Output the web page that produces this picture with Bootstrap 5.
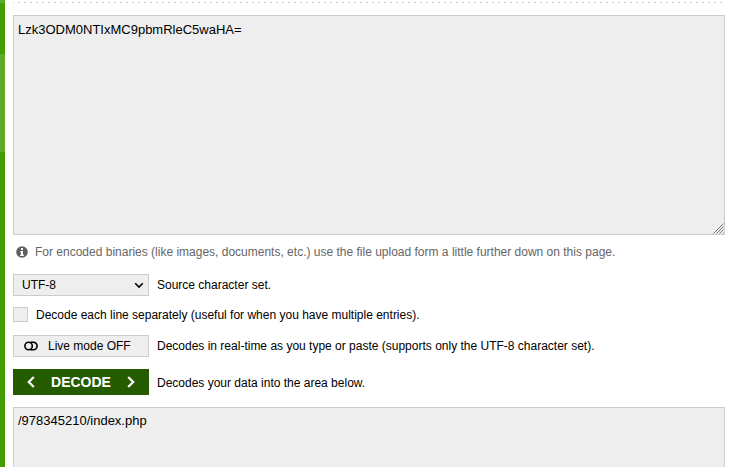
<!DOCTYPE html>
<html lang="en">
<head>
<meta charset="utf-8">
<meta name="viewport" content="width=device-width, initial-scale=1">
<title>Base64 Decode</title>
<link href="https://cdn.jsdelivr.net/npm/bootstrap@5.3.0/dist/css/bootstrap.min.css" rel="stylesheet">
<style>
body{font:12px/16px "Liberation Sans",Arial,sans-serif;color:#000;background:#fff}
.page-view{height:467px}
.side-strip{width:5px;background:linear-gradient(#61ab2c 3px,#429b00 3px 54px,#61ab2c 54px 152px,#429b00 152px)}
.decoder{width:712px;margin-left:8px}
.separator{height:1px;margin-top:2px;margin-bottom:12px;background:repeating-linear-gradient(90deg,#ccc 0 1px,transparent 1px 5px,#ccc 5px 6px)}
.form-control.data-area{border:1px solid #ccc;border-radius:0;background:#eee;color:#000;font-size:13px;line-height:18px;padding:5px 4px;height:220px;min-height:0;resize:none}
.form-control.result-area{height:180px;margin-top:12px;padding-top:4px}
.grip{right:1px;bottom:1px;pointer-events:none}
.hint{color:#666;height:16px;margin-top:9px}
.hint svg{margin:0 7px 0 3px}
.option{column-gap:8px}
.charset-row{margin-top:14px}
.lines-row{margin-top:11px;height:15px}
.live-row{margin-top:13px}
.decode-row{margin-top:12px}
.decode-row>span{padding-top:2px}
.control{width:136px;height:22px;flex:none}
.form-select.charset{border:1px solid #ccc;border-radius:0;background:#eee;color:#000;font-size:12px;line-height:16px;padding:0 8px;min-height:0}
.select-wrap svg{right:5px;top:8px;pointer-events:none}
.form-check-input.line-check{width:15px;height:15px;border:1px solid #ccc;border-radius:0;background:#eee}
.btn.live{border:1px solid #ccc;border-radius:0;background:#eee;color:#000;font-size:12px;line-height:20px;padding:0 10px;column-gap:10px}
.btn.decode{height:26px;border:0;border-radius:0;background:#265c00;color:#fff;font-size:14px;font-weight:bold;line-height:26px;padding:0 14px}
</style>
</head>
<body>
<div class="page-view d-flex overflow-hidden">
<div class="side-strip flex-shrink-0"></div>
<main class="decoder flex-shrink-0">
<div class="separator"></div>
<div class="position-relative">
<textarea class="form-control data-area d-block" spellcheck="false" aria-label="Encoded data">Lzk3ODM0NTIxMC9pbmRleC5waHA=</textarea>
<svg class="grip position-absolute" width="11" height="11" viewBox="0 0 11 11" fill="none" stroke="#777" stroke-width="1"><path d="M.5 10.5l10-10M3.5 10.5l7-7M6.5 10.5l4-4M9.5 10.5l1-1"/></svg>
</div>
<div class="hint d-flex align-items-center">
<svg width="12" height="12" viewBox="0 0 12 12"><circle cx="6" cy="6" r="5.8" fill="#606060"/><path d="M5 2h2v2H5zM4.3 5H7v3.5h.8V10H4.2V8.5H5v-2h-.7z" fill="#fff"/></svg>
<span>For encoded binaries (like images, documents, etc.) use the file upload form a little further down on this page.</span>
</div>
<div class="option charset-row d-flex align-items-center">
<div class="control select-wrap position-relative"><select class="form-select charset h-100" aria-label="Character set"><option>UTF-8</option></select>
<svg class="position-absolute" width="10" height="7" viewBox="0 0 10 7"><path d="M1.2 1.3 5 5.1l3.8-3.8" fill="none" stroke="#000" stroke-width="1.6"/></svg></div>
<span>Source character set.</span>
</div>
<div class="option lines-row d-flex align-items-center">
<input class="form-check-input line-check m-0 flex-shrink-0" type="checkbox" id="lines"><label for="lines">Decode each line separately (useful for when you have multiple entries).</label>
</div>
<div class="option live-row d-flex align-items-center">
<button class="btn live control d-flex align-items-center" type="button">
<svg width="14" height="10" viewBox="0 0 14 10" fill="none" stroke="#000" stroke-width="1.6"><circle cx="4.6" cy="5" r="3.7"/><path d="M6.5 1.3h2.9a3.7 3.7 0 0 1 0 7.4H6.5"/></svg>
<span>Live mode OFF</span></button>
<span>Decodes in real-time as you type or paste (supports only the UTF-8 character set).</span>
</div>
<div class="option decode-row d-flex align-items-center">
<button class="btn decode control d-flex align-items-center justify-content-between" type="button">
<svg width="8" height="12" viewBox="0 0 8 12"><path d="M6.8 1 1.8 6l5 5" fill="none" stroke="#fff" stroke-width="2.2"/></svg>
<span>DECODE</span>
<svg width="8" height="12" viewBox="0 0 8 12"><path d="m1.2 1 5 5-5 5" fill="none" stroke="#fff" stroke-width="2.2"/></svg></button>
<span>Decodes your data into the area below.</span>
</div>
<textarea class="form-control data-area result-area d-block" spellcheck="false" aria-label="Decoded data">/978345210/index.php</textarea>
</main>
</div>
<script src="https://cdn.jsdelivr.net/npm/bootstrap@5.3.0/dist/js/bootstrap.bundle.min.js"></script>
</body>
</html>
